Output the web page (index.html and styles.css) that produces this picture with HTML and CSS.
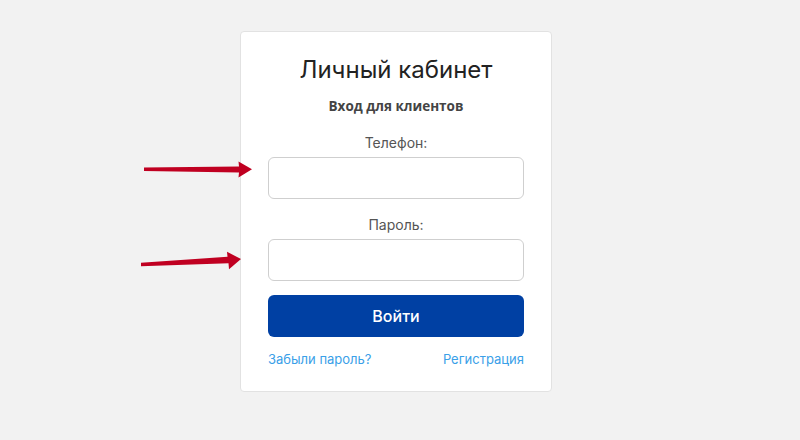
FILE: index.html
```html
<!DOCTYPE html>
<html lang="ru">
<head>
<meta charset="utf-8">
<title>Личный кабинет</title>
<link rel="stylesheet" href="styles.css">
</head>
<body>
<div class="page">
  <form class="card">
    <h1 class="title">Личный кабинет</h1>
    <div class="subtitle">Вход для клиентов</div>
    <label class="label" for="phone">Телефон:</label>
    <input class="field" id="phone" type="text">
    <label class="label" for="pass">Пароль:</label>
    <input class="field" id="pass" type="password">
    <button class="btn" type="button">Войти</button>
    <div class="links">
      <a class="link" href="#">Забыли пароль?</a>
      <a class="link" href="#">Регистрация</a>
    </div>
  </form>
</div>
<svg class="arrows" width="800" height="440" viewBox="0 0 800 440">
  <path d="M144 167.6 L239 166.4 L238.5 161.5 L252 169.3 L238.5 177.5 L239 172.4 L144 171.0 Z" fill="#c00021"/>
  <path d="M141 262.8 L227.5 256.8 L227 251.8 L241 259 L229 269.2 L228.5 263.2 L141 266.2 Z" fill="#c00021"/>
</svg>
</body>
</html>
```
FILE: styles.css
```css
html, body {
  margin: 0;
  padding: 0;
  background: #f2f2f2;
  font-family: "Inter", "Noto Sans", sans-serif;
}
.page {
  padding: 31px 0 0 240px;
}
.card {
  width: 256px;
  padding: 22px 27px 24px;
  background: #fff;
  border: 1px solid #e2e2e2;
  border-radius: 4px;
  display: flex;
  flex-direction: column;
  align-items: stretch;
  text-align: center;
}
.title {
  margin: 0;
  font-size: 24px;
  font-weight: 400;
  color: #222;
  line-height: 32px;
}
.subtitle {
  margin-top: 11px;
  font-family: "Open Sans", sans-serif;
  font-size: 13.5px;
  font-weight: 700;
  color: #444;
  line-height: 18px;
}
.label {
  margin-top: 19px;
  font-size: 14px;
  color: #555;
  line-height: 18px;
}
.field {
  margin-top: 5px;
  height: 42px;
  box-sizing: border-box;
  border: 1px solid #cfcfcf;
  border-radius: 6px;
  background: #fff;
  outline: none;
  font-size: 14px;
  padding: 0 12px;
}
.field + .label {
  margin-top: 17px;
}
.btn {
  margin-top: 14px;
  height: 42px;
  border: 0;
  border-radius: 6px;
  background: #0040a3;
  color: #fff;
  font-family: "Inter", "Noto Sans", sans-serif;
  font-size: 16px;
  font-weight: 500;
}
.links {
  margin-top: 14px;
  display: flex;
  justify-content: space-between;
  line-height: 16px;
}
.link {
  font-size: 13px;
  color: #3aa0e8;
  text-decoration: none;
}
.arrows {
  position: absolute;
  left: 0;
  top: 0;
  pointer-events: none;
}
```
